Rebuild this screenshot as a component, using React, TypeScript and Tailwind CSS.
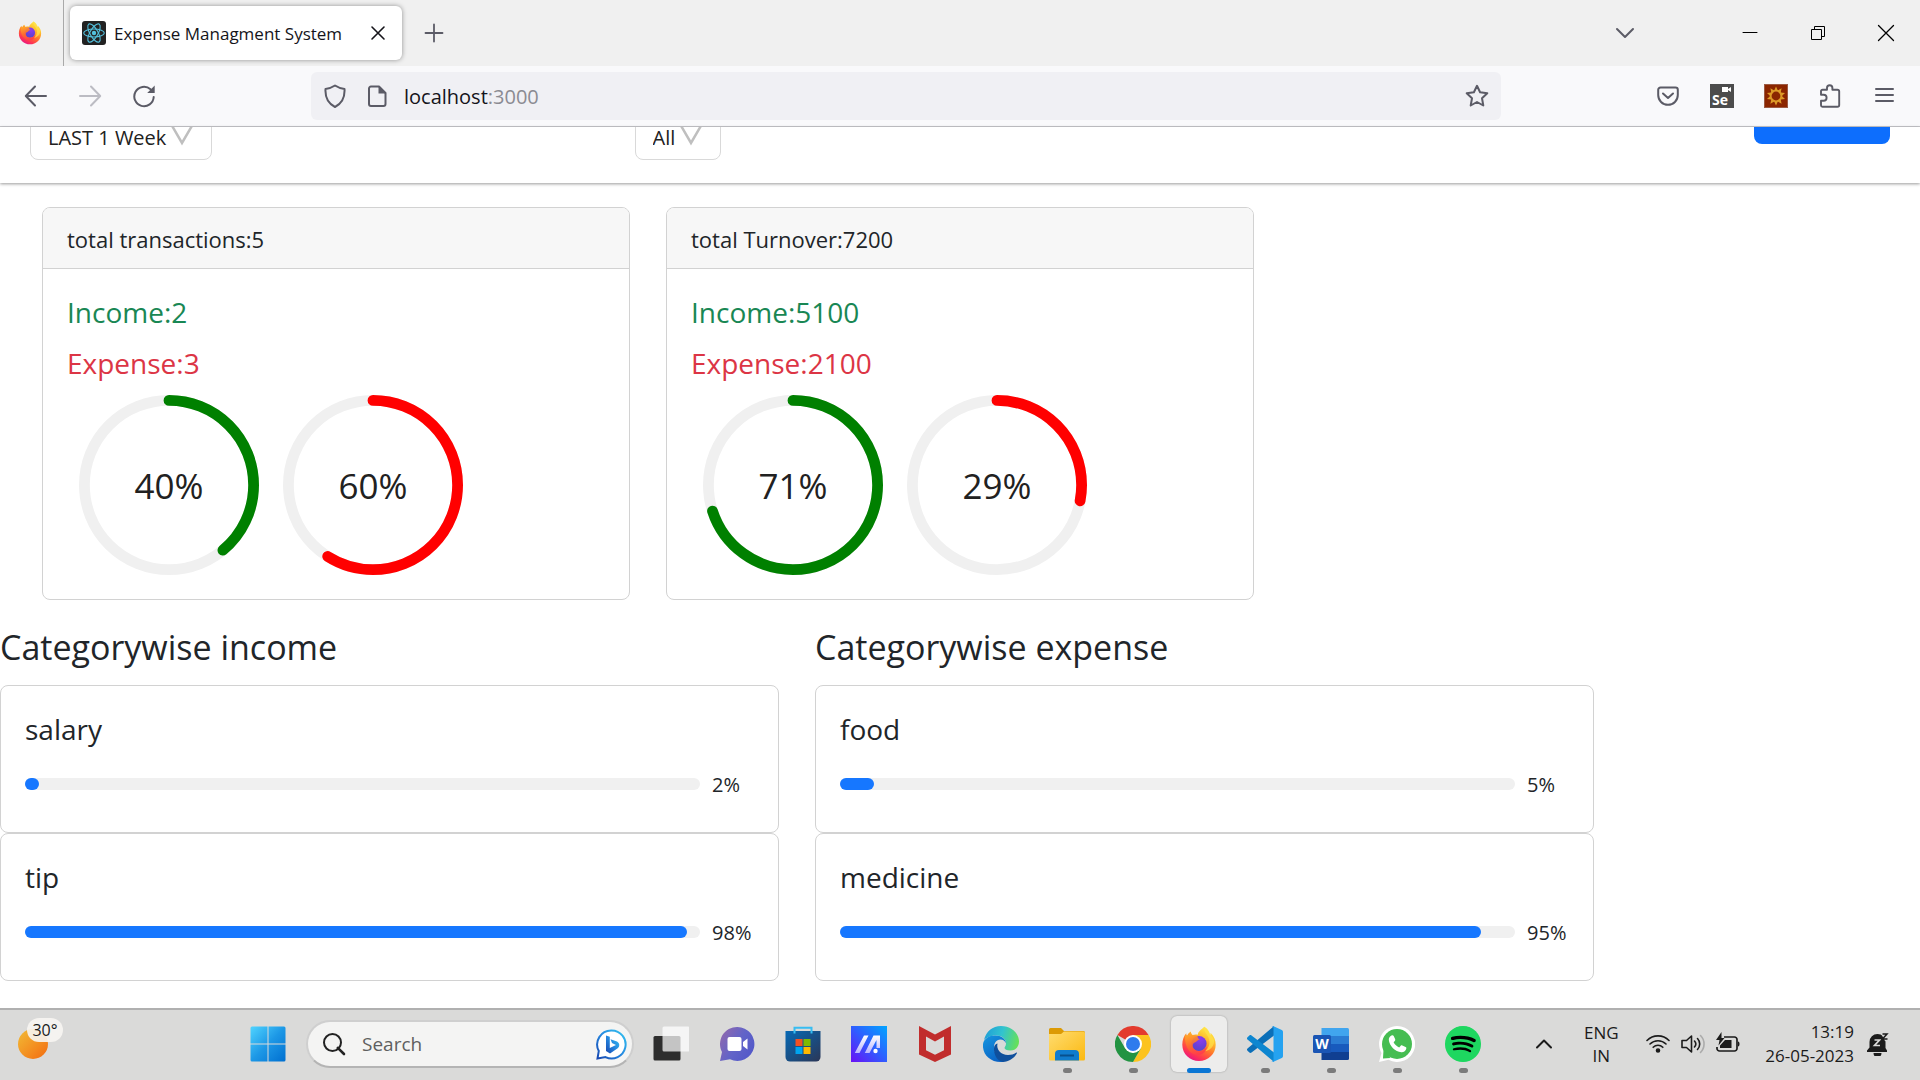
import React from "react";
import { FaSpotify } from "react-icons/fa";

type IconProps = { className?: string };

const FirefoxIcon = ({ className = "", id }: IconProps & { id: string }) => (
  <svg className={className} viewBox="0 0 36 36" aria-hidden="true">
    <defs>
      <linearGradient id={`${id}a`} x1="0.8" y1="0" x2="0.25" y2="1">
        <stop offset="0" stopColor="#fff44f" />
        <stop offset="0.3" stopColor="#ffc02e" />
        <stop offset="0.55" stopColor="#ff7a2a" />
        <stop offset="0.8" stopColor="#ff3750" />
        <stop offset="1" stopColor="#e5108c" />
      </linearGradient>
      <radialGradient id={`${id}b`} cx="0.6" cy="0.2" r="0.9">
        <stop offset="0" stopColor="#8d3cf0" />
        <stop offset="0.6" stopColor="#6a3fd8" />
        <stop offset="1" stopColor="#4f4bc4" />
      </radialGradient>
      <linearGradient id={`${id}c`} x1="0.2" y1="0" x2="0.6" y2="1">
        <stop offset="0" stopColor="#ffa52a" />
        <stop offset="0.5" stopColor="#ff6a2f" />
        <stop offset="1" stopColor="#ff3a4c" />
      </linearGradient>
    </defs>
    <path
      d="M23.2 0.8c4.6 3 5 6.400 6 8.700 0.300-1 0.400-2 0.300-2.800 3.800 3.700 5.200 7.800 5.200 12 0 9.200-7.500 16.300-16.700 16.300S1.300 27.800 1.300 18.700c0-5 1.500-8.500 3.900-11.400 0.100 1.300 0.400 2.100 0.900 2.900 0.500-1.900 1.800-3.500 3.700-4.600 0 1.300 0.700 2.500 1.800 3.300 1.500-0.500 3.500-0.700 5.200-0.200C17.200 5.200 20.500 3.700 23.200 0.800Z"
      fill={`url(#${id}a)`}
    />
    <circle cx="18" cy="17.500" r="7.600" fill={`url(#${id}b)`} />
    <path
      d="M4 9.500c2-0.500 5.200-0.900 8 0.300 1.500-0.600 3-0.400 4.500 0.400 0.200 1.800 0.800 2.600 2.500 3.300-1.700 0.300-3.300 1.300-4 2.500-1.400 0.400-2.600 1.200-3.200 2.400-0.500 3.800 2.200 6.700 6.200 6.700 3.500 0 6-2 7.700-4.500 0 5-3.700 8.400-8.500 8.400C9.500 29 3.600 22 4 9.500Z"
      fill={`url(#${id}c)`}
      opacity="0.9"
    />
    <path d="M23.200 0.800c-1 5.600 4 7.600 5 13 1 5-1 8.500-4 11.500 6-1.500 9-6 9-10.800-1-3-2.500-4.500-4-6-0.800-3-2.500-5.700-6-7.700Z" fill="#ffe14a" opacity="0.75" />
  </svg>
);

const ReactLogo = () => (
  <svg className="size-6 shrink-0" viewBox="0 0 24 24" aria-hidden="true">
    <rect width="24" height="24" rx="3" fill="#222" />
    <g fill="none" stroke="#53c1de" strokeWidth="1.1">
      <ellipse cx="12" cy="12" rx="10.300" ry="4" />
      <ellipse cx="12" cy="12" rx="10.300" ry="4" transform="rotate(60 12 12)" />
      <ellipse cx="12" cy="12" rx="10.300" ry="4" transform="rotate(120 12 12)" />
    </g>
    <circle cx="12" cy="12" r="2.200" fill="#53c1de" />
  </svg>
);

type LineProps = {
  d: string;
  size?: string;
  color?: string;
  width?: number;
  box?: number;
  children?: React.ReactNode;
};
const Line = ({ d, size = "size-6", color = "#5b5b66", width = 2, box = 24, children }: LineProps) => (
  <svg
    className={`${size} shrink-0`}
    viewBox={`0 0 ${box} ${box}`}
    fill="none"
    stroke={color}
    strokeWidth={width}
    strokeLinecap="round"
    strokeLinejoin="round"
    aria-hidden="true"
  >
    <path d={d} />
    {children}
  </svg>
);

const iconButton = "flex shrink-0 items-center justify-center";

function TabStrip() {
  return (
    <header className="flex h-[66px] items-center bg-[#f0f0f0]">
      <div className="flex h-full w-16 items-center border-r border-[#a9a9a9] pl-[18px]">
        <FirefoxIcon id="ffs" className="size-6" />
      </div>
      <div className="ml-[6px] flex h-[54px] w-[332px] items-center rounded-md bg-white pr-3 pl-3 shadow-[0_0_5px_rgba(0,0,0,0.4)]">
        <ReactLogo />
        <span className="ml-2 flex-1 pt-px text-[17px] leading-6 whitespace-nowrap text-[#15141a]">Expense Managment System</span>
        <button type="button" aria-label="Close tab" className={`${iconButton} size-6`}>
          <Line d="M6 6l12 12M18 6L6 18" color="#15141a" width={1.6} />
        </button>
      </div>
      <button type="button" aria-label="New tab" className={`${iconButton} ml-5 size-6`}>
        <Line d="M12 3.500v17M3.500 12h17" width={1.8} />
      </button>
      <div className="ml-auto flex items-center pr-[14px]">
        <button type="button" aria-label="List all tabs" className={`${iconButton} size-10`}>
          <Line d="M4 8l8 8 8-8" />
        </button>
        <button type="button" aria-label="Minimize" className={`${iconButton} ml-[85px] size-10`}>
          <Line d="M5 11.500h14" color="#000" width={1} />
        </button>
        <button type="button" aria-label="Restore" className={`${iconButton} ml-7 size-10`}>
          <svg className="size-6" viewBox="0 0 24 24" fill="none" stroke="#000" aria-hidden="true">
            <path d="M5.500 8.500h10v10h-10zM8.500 8.500v-3h10v10h-3" />
          </svg>
        </button>
        <button type="button" aria-label="Close window" className={`${iconButton} ml-7 size-10`}>
          <Line d="M4.500 4.500l15 15M19.500 4.500l-15 15" color="#000" width={1.3} />
        </button>
      </div>
    </header>
  );
}

function Toolbar() {
  return (
    <nav className="flex h-[61px] items-center border-b border-[#c8c8cc] bg-[#f9f9fb] pr-6 pl-6">
      <button type="button" aria-label="Back" className={`${iconButton} size-6`}>
        <Line d="M22 12H2M11 2.500L1.800 12 11 21.500" />
      </button>
      <button type="button" aria-label="Forward" disabled className={`${iconButton} ml-[30px] size-6`}>
        <Line d="M2 12h20M13 2.500l9.200 9.500L13 21.500" color="#bcbcc3" />
      </button>
      <button type="button" aria-label="Reload" className={`${iconButton} ml-[30px] size-6`}>
        <svg className="size-6" viewBox="0 0 24 24" fill="none" stroke="#5b5b66" strokeWidth="2" strokeLinecap="round" aria-hidden="true">
          <path d="M18.500 5.300A9.700 9.700 0 1 0 21.700 13" />
          <path d="M22.700 1.500v7.500h-7.500z" fill="#5b5b66" stroke="none" />
        </svg>
      </button>
      <div className="ml-[155px] flex h-12 min-w-0 flex-1 items-center rounded-md bg-[#f0f0f4] px-3 xl:mr-[155px]">
        <Line d="M12 1.500c3 2 6 3 9.500 3.500.5 8-2.500 14.500-9.500 18-7-3.500-10-10-9.500-18C6 4.500 9 3.500 12 1.500z" />
        <svg className="ml-[18px] size-6 shrink-0" viewBox="0 0 24 24" fill="none" stroke="#5b5b66" strokeWidth="2" strokeLinejoin="round" aria-hidden="true">
          <path d="M6 2.500h8l6.500 6.500v11a2 2 0 0 1-2 2H6a2 2 0 0 1-2-2V4.500a2 2 0 0 1 2-2z" />
          <path d="M13.500 2v7.500H21z" fill="#5b5b66" stroke="none" />
        </svg>
        <a href="#" className="ml-[15px] flex-1 pt-[2px] text-xl leading-7 text-[#15141a]">
          localhost<span className="text-[#8b8b92]">:3000</span>
        </a>
        <button type="button" aria-label="Bookmark this page" className={`${iconButton} size-6`}>
          <Line d="M12 1.800l3.100 6.500 7.200 1-5.300 5 1.300 7.200-6.300-3.500-6.300 3.500 1.300-7.200-5.300-5 7.200-1z" />
        </button>
      </div>
      <div className="flex items-center gap-[30px]">
        <button type="button" aria-label="Save to Pocket" className={iconButton}>
          <Line d="M4.500 3.500h15a2.300 2.300 0 0 1 2.300 2.300V11a9.800 9.800 0 0 1-19.600 0V5.800a2.300 2.300 0 0 1 2.300-2.300zM7 9.500l5 4.500 5-4.500" />
        </button>
        <button type="button" aria-label="Selenium IDE" className="relative flex size-6 items-end bg-[#4c4c4c] pl-[2px] text-sm leading-4 font-bold text-white">
          Se
          <svg className="absolute top-[3px] right-[3px] h-[5px] w-[9px]" viewBox="0 0 9 5" fill="#fff" aria-hidden="true">
            <path d="M0 0h6v5H0zM6 2l3-2v5L6 3z" />
          </svg>
        </button>
        <button type="button" aria-label="Sun extension" className={iconButton}>
          <svg className="size-6" viewBox="0 0 24 24" aria-hidden="true">
            <rect x="0.500" y="0.500" width="23" height="23" fill="#8b2500" stroke="#9c5a43" />
            <circle cx="12" cy="12" r="5.300" fill="none" stroke="#dd9a28" strokeWidth="1.800" />
            {[0, 36, 72, 108, 144, 180, 216, 252, 288, 324].map((a) => (
              <path key={a} d="M10.200 6.500L12 2.500l1.800 4z" fill="#dd9a28" transform={`rotate(${a} 12 12)`} />
            ))}
          </svg>
        </button>
        <button type="button" aria-label="Extensions" className={iconButton}>
          <Line d="M3 10.800V7.200a1.500 1.500 0 0 1 1.500-1.500H9V4a2.700 2.700 0 0 1 5.400 0v1.700h5a1.800 1.800 0 0 1 1.800 1.800V21a1.800 1.800 0 0 1-1.800 1.800H4.500A1.500 1.500 0 0 1 3 21.300v-4.500h2.600a3 3 0 0 0 0-6z" width={1.9} />
        </button>
        <button type="button" aria-label="Open application menu" className={iconButton}>
          <Line d="M4 5h17M4 11h17M4 17h17" />
        </button>
      </div>
    </nav>
  );
}

function FilterSelect({ label, value, width }: { label: string; value: string; width: string }) {
  return (
    <div className={`relative -mt-[14px] h-[47px] rounded-lg border border-[#d9d9d9] ${width}`}>
      <select aria-label={label} className="size-full appearance-none bg-transparent pt-[2px] pl-[17px] text-xl leading-7 text-[#212121]">
        <option>{value}</option>
      </select>
      <svg className="pointer-events-none absolute top-2 right-[17px] h-6 w-6" viewBox="0 0 24 24" fill="none" stroke="#bfbfbf" strokeWidth="2.500" aria-hidden="true">
        <path d="M1 2l11 19L23 2" />
      </svg>
    </div>
  );
}

function FilterBar() {
  return (
    <section className="flex items-start overflow-hidden px-[30px] pb-[23px] shadow-[0_1px_3px_rgba(0,0,0,0.4)]">
      <div className="w-[32.500%]">
        <FilterSelect label="Period" value="LAST 1 Week" width="w-[182px]" />
      </div>
      <FilterSelect label="Type" value="All" width="w-[86px]" />
      <button type="button" aria-label="Add" className="-mt-10 ml-auto h-[57px] w-[136px] rounded-lg bg-[#0d6efd]" />
    </section>
  );
}

function Ring({ percent, stroke }: { percent: number; stroke: string }) {
  return (
    <div className="relative flex size-[180px] items-center justify-center" role="img" aria-label={`${percent} percent`}>
      <svg className="absolute inset-0 -rotate-90" viewBox="0 0 100 100" fill="none" strokeWidth="6" strokeLinecap="round" aria-hidden="true">
        <circle cx="50" cy="50" r="47" stroke="#f0f0f0" />
        <circle cx="50" cy="50" r="47" stroke={stroke} pathLength={100} strokeDasharray={`${percent - 1} 200`} />
      </svg>
      <span className="relative pt-[2px] text-[35px] leading-9 text-[#212121]">{percent}%</span>
    </div>
  );
}

type Summary = { title: string; income: number; expense: number; incomePct: number; expensePct: number };
const summaries: Summary[] = [
  { title: "total transactions:5", income: 2, expense: 3, incomePct: 40, expensePct: 60 },
  { title: "total Turnover:7200", income: 5100, expense: 2100, incomePct: 71, expensePct: 29 },
];

function SummaryCard({ title, income, expense, incomePct, expensePct }: Summary) {
  return (
    <article className="overflow-hidden rounded-lg border border-[#d2d2d2]">
      <header className="border-b border-[#d2d2d2] bg-[#f7f7f7] px-6 pt-[13px] pb-[11px] text-[22px] leading-9">{title}</header>
      <div className="px-6 pt-[25px] pb-6">
        <h5 className="mb-[15px] text-[28px] leading-9 text-[#198754]">Income:{income}</h5>
        <h5 className="mb-[14px] text-[28px] leading-9 text-[#dc3545]">Expense:{expense}</h5>
        <div className="flex flex-wrap gap-6 pl-3">
          <Ring percent={incomePct} stroke="#008000" />
          <Ring percent={expensePct} stroke="#ff0000" />
        </div>
      </div>
    </article>
  );
}

const categories = [
  { heading: "Categorywise income", rows: [{ name: "salary", pct: 2 }, { name: "tip", pct: 98 }] },
  { heading: "Categorywise expense", rows: [{ name: "food", pct: 5 }, { name: "medicine", pct: 95 }] },
];

function CategoryCard({ name, pct }: { name: string; pct: number }) {
  return (
    <article className="rounded-lg border border-[#d2d2d2] px-6 pt-[25px] pb-8">
      <h5 className="text-[28px] leading-9">{name}</h5>
      <div className="mt-5 flex h-[33px] items-center gap-3">
        <div className="h-3 flex-1 rounded-full bg-[#f0f0f0]" role="progressbar" aria-label={name} aria-valuenow={pct}>
          <div className="h-3 rounded-full bg-[#1677ff]" style={{ width: `${pct}%` }} />
        </div>
        <span className="w-[42px] pt-[2px] text-xl leading-8">{pct}%</span>
      </div>
    </article>
  );
}

function CategorySection() {
  return (
    <section className="mt-[25px] grid grid-cols-12 gap-9">
      {categories.map((c) => (
        <div key={c.heading} className="col-span-5">
          <h4 className="mb-4 text-[34px] leading-[44px]">{c.heading}</h4>
          {c.rows.map((r) => (
            <CategoryCard key={r.name} {...r} />
          ))}
        </div>
      ))}
    </section>
  );
}

const StartIcon = () => (
  <svg className="size-9" viewBox="0 0 36 36" aria-hidden="true">
    <defs>
      <linearGradient id="win" x1="0" y1="0" x2="1" y2="1">
        <stop offset="0" stopColor="#50d4ff" />
        <stop offset="0.5" stopColor="#1d98e6" />
        <stop offset="1" stopColor="#006fd0" />
      </linearGradient>
    </defs>
    <path d="M2 .5h15.500v17H.5V2A1.500 1.500 0 0 1 2 .5zM18.500.5H34A1.500 1.500 0 0 1 35.500 2v15.500h-17zM.5 18.500h17v17H2A1.500 1.500 0 0 1 .5 34zM18.500 18.500h17V34a1.500 1.500 0 0 1-1.500 1.500H18.500z" fill="url(#win)" />
  </svg>
);

const BingIcon = () => (
  <svg className="size-[31px] shrink-0" viewBox="0 0 31 31" aria-hidden="true">
    <defs>
      <linearGradient id="bing" x1="1" y1="0" x2="0" y2="1">
        <stop offset="0" stopColor="#35c5f0" />
        <stop offset="0.500" stopColor="#2588e0" />
        <stop offset="1" stopColor="#1747b0" />
      </linearGradient>
    </defs>
    <path d="M15.500 1.500a14 14 0 1 1-6 26.600L1.500 29.500 2.800 22A14 14 0 0 1 15.500 1.500z" fill="#fff" stroke="url(#bing)" strokeWidth="2" />
    <path d="M10 6.500l3.800 1.300V19L20 16l-4-2-1.500-3.800 6.500 2.300c2.800 1.500 3 5 .7 6.800L14 24.500l-4-2.500z" fill="url(#bing)" />
  </svg>
);

const TaskViewIcon = () => (
  <svg className="size-9" viewBox="0 0 36 36" aria-hidden="true">
    <rect x="0.500" y="10" width="27" height="24.500" rx="1.500" fill="#2d2d2d" />
    <rect x="9.500" y="0.500" width="27" height="25" rx="1.500" fill="#fff" opacity="0.72" />
  </svg>
);

const ChatIcon = () => (
  <svg className="size-9" viewBox="0 0 36 36" aria-hidden="true">
    <defs>
      <linearGradient id="chat" x1="0" y1="0.200" x2="1" y2="0.800">
        <stop offset="0" stopColor="#8f68ae" />
        <stop offset="0.500" stopColor="#6264c8" />
        <stop offset="1" stopColor="#5157c9" />
      </linearGradient>
    </defs>
    <path d="M18.300 1A17 17 0 1 1 11 33.300L1 35l2-9A17 17 0 0 1 18.300 1z" fill="url(#chat)" />
    <rect x="8.500" y="11" width="14" height="14" rx="2" fill="#fff" />
    <path d="M24 16l4.500-3.500v11L24 20z" fill="#fff" />
  </svg>
);

const StoreIcon = () => (
  <svg className="size-9" viewBox="0 0 36 36" aria-hidden="true">
    <defs>
      <linearGradient id="store" x1="0" y1="0" x2="1" y2="1">
        <stop offset="0" stopColor="#0669b5" />
        <stop offset="1" stopColor="#2b3656" />
      </linearGradient>
    </defs>
    <path d="M.5 5h35v26a4.500 4.500 0 0 1-4.500 4.500H5A4.500 4.500 0 0 1 .5 31z" fill="url(#store)" />
    <path d="M9.500 7.500V1.800h17v5.700" fill="none" stroke="#37bdf2" strokeWidth="2" />
    <path d="M10.500 13h7v7h-7z" fill="#f25022" />
    <path d="M18.500 13h7v7h-7z" fill="#7fba00" />
    <path d="M10.500 21h7v7h-7z" fill="#00a4ef" />
    <path d="M18.500 21h7v7h-7z" fill="#ffb900" />
  </svg>
);

const AsusIcon = () => (
  <svg className="size-9" viewBox="0 0 36 36" aria-hidden="true">
    <defs>
      <linearGradient id="asus" x1="1" y1="0" x2="0" y2="1">
        <stop offset="0" stopColor="#00a5ff" />
        <stop offset="0.500" stopColor="#2f5dff" />
        <stop offset="1" stopColor="#6a10f5" />
      </linearGradient>
      <linearGradient id="asusMark" x1="0" y1="0" x2="0" y2="1">
        <stop offset="0" stopColor="#ffffff" />
        <stop offset="1" stopColor="#b9b4ff" />
      </linearGradient>
    </defs>
    <path d="M0 0h36v36H0z" fill="url(#asus)" />
    <path d="M13 9.500h4.500L8.500 27H3.800zM22.500 9.500H29V22h-3.500v-8L18.500 27h-4.700z" fill="url(#asusMark)" />
    <circle cx="24.500" cy="25" r="2.200" fill="#fff" />
  </svg>
);

const McAfeeIcon = () => (
  <svg className="size-9" viewBox="0 0 36 36" aria-hidden="true">
    <path fillRule="evenodd" d="M2 0l16 8.500L34 0v28.500L18 36 2 28.500zM9 10.500v13.700l9 4.600 9-4.600V10.500l-9 5z" fill="#c12d2d" />
  </svg>
);

const EdgeIcon = () => (
  <svg className="size-9" viewBox="0 0 36 36" aria-hidden="true">
    <defs>
      <linearGradient id="edgeA" x1="0" y1="0.300" x2="1" y2="0.500">
        <stop offset="0" stopColor="#1f9fd8" />
        <stop offset="0.500" stopColor="#32c3cf" />
        <stop offset="1" stopColor="#66e05a" />
      </linearGradient>
      <linearGradient id="edgeB" x1="0" y1="0" x2="0.600" y2="1">
        <stop offset="0" stopColor="#1596e0" />
        <stop offset="1" stopColor="#0b62c4" />
      </linearGradient>
    </defs>
    <path d="M1 14C3 5.500 9.500 0 18 0c10.500 0 18 7.500 18 15.500 0 5.500-4 9-8.500 9-4 0-6-1.500-6-2.600 0-1 1.500-1.700 1.500-4.400C23 13 19 9.500 13 9.500 7 9.500 3 12 1 14z" fill="url(#edgeA)" />
    <path d="M0 18c1-5.500 6-8.500 12-8.500 6.500 0 10.800 3.500 11 7.800-1-2.300-3-3.700-5.500-3.700-4.500 0-6.500 4-6.500 8C11 28 16 33 21 35.700 8.500 37.500-1 29 0 18z" fill="url(#edgeB)" />
    <path d="M14.500 17.500c-1.500 6 3.500 11.500 10.500 11.500 3.300 0 5.800-1 8-2.300.7-.3 1.200.2.800.9C31 32.500 25.500 36 20 36 14 35 10.500 28 11 22c.2-2.500 1.500-4 3.500-4.500z" fill="#0f4f9c" />
  </svg>
);

const FolderIcon = () => (
  <svg className="size-9" viewBox="0 0 36 36" aria-hidden="true">
    <defs>
      <linearGradient id="fold" x1="0" y1="0" x2="1" y2="1">
        <stop offset="0" stopColor="#ffdc70" />
        <stop offset="1" stopColor="#fbb911" />
      </linearGradient>
    </defs>
    <path d="M0 3.500A1.500 1.500 0 0 1 1.500 2H12l3 3h19.500A1.500 1.500 0 0 1 36 6.500V20H0z" fill="#dc9a05" />
    <path d="M0 8h12l3-2.500h19.500A1.500 1.500 0 0 1 36 7v26a1.500 1.500 0 0 1-1.500 1.500h-33A1.500 1.500 0 0 1 0 33z" fill="url(#fold)" />
    <path d="M6 34.500V28a4 4 0 0 1 4-4h16a4 4 0 0 1 4 4v6.500z" fill="#107cce" />
    <path d="M11 29.500h14" stroke="#08508e" strokeWidth="2" />
  </svg>
);

const ChromeIcon = () => (
  <svg className="size-9" viewBox="0 0 36 36" aria-hidden="true">
    <path d="M18 18L2.400 9A18 18 0 0 1 33.600 9z" fill="#e33b2e" />
    <path d="M18 9h15.600A18 18 0 0 1 18 36l7.800-13.500z" fill="#fcc31e" />
    <path d="M2.400 9l7.800 13.500L18 27l7.800-4.500L18 36A18 18 0 0 1 2.400 9z" fill="#229342" />
    <circle cx="18" cy="18" r="9" fill="#fff" />
    <circle cx="18" cy="18" r="7" fill="#2f7bed" />
  </svg>
);

const CodeIcon = () => (
  <svg className="size-9" viewBox="0 0 36 36" aria-hidden="true">
    <path d="M27 0v9.500L4.500 26.600c-.6.500-1.500.5-2.100-.1L.5 24.700c-.7-.6-.7-1.700 0-2.300z" fill="#0b6fb8" />
    <path d="M27 36v-9.500L4.500 9.400c-.6-.5-1.500-.5-2.100.1L.5 11.300c-.7.600-.7 1.700 0 2.300z" fill="#0d86d0" />
    <path d="M26.500.2L34.800 4A2 2 0 0 1 36 5.900v24.200a2 2 0 0 1-1.200 1.900l-8.300 3.800c-.8.300-1.500.1-2-.4 1 .5 2-.2 2-1.400V2c0-1.200-1-1.900-2-1.400.5-.5 1.200-.7 2-.4z" fill="#25a2f0" />
  </svg>
);

const WordIcon = () => (
  <span className="relative block size-9">
    <svg className="size-9" viewBox="0 0 36 36" aria-hidden="true">
      <path d="M8.500 2h26A1.500 1.500 0 0 1 36 3.500V10H8.500z" fill="#41a5ee" />
      <path d="M8.500 10H36v8H8.500z" fill="#2b7cd3" />
      <path d="M8.500 18H36v8H8.500z" fill="#185abd" />
      <path d="M8.500 26H36v6.500a1.500 1.500 0 0 1-1.500 1.500h-26z" fill="#103f91" />
      <rect y="9" width="18" height="18" rx="1.500" fill="#1a55b4" />
    </svg>
    <span className="absolute top-[9px] left-0 w-[18px] text-center text-sm leading-[18px] font-bold text-white">W</span>
  </span>
);

const WhatsAppIcon = () => (
  <svg className="size-9" viewBox="0 0 36 36" aria-hidden="true">
    <path d="M18 0a18 18 0 1 1-8.500 33.800L0 36l2.500-9A18 18 0 0 1 18 0z" fill="#fff" />
    <circle cx="18" cy="18" r="15" fill="#46bd52" />
    <path d="M4.500 24l7 8L4 32.500z" fill="#46bd52" />
    <path d="M12.500 9.500c.8-.5 1.800-.3 2.200.5l1.500 3.300c.2.600 0 1.200-.4 1.600l-1.200 1.300c1.200 2.300 3.200 4.200 5.600 5.300l1.500-1.700c.4-.5 1-.6 1.600-.4l3.300 1.600c.6.300.9.800.7 1.500-.4 2.400-2.600 3.900-5 3.700-6-.5-12-6.300-12.500-12.500-.1-1.700 1-3.300 2.700-4.200z" fill="#fff" />
  </svg>
);

const SpotifyIcon = () => (
  <span className="flex size-9 items-center justify-center rounded-full bg-[radial-gradient(circle,#000_60%,#1ed760_62%)]">
    <FaSpotify className="size-9 text-[#1ed760]" aria-hidden="true" />
  </span>
);

const apps: { name: string; icon: React.ReactNode; state?: "open" | "active" }[] = [
  { name: "Task View", icon: <TaskViewIcon /> },
  { name: "Chat", icon: <ChatIcon /> },
  { name: "Microsoft Store", icon: <StoreIcon /> },
  { name: "MyASUS", icon: <AsusIcon /> },
  { name: "McAfee", icon: <McAfeeIcon /> },
  { name: "Edge", icon: <EdgeIcon /> },
  { name: "File Explorer", icon: <FolderIcon />, state: "open" },
  { name: "Chrome", icon: <ChromeIcon />, state: "open" },
  { name: "Firefox", icon: <FirefoxIcon id="ffl" className="size-9" />, state: "active" },
  { name: "Visual Studio Code", icon: <CodeIcon />, state: "open" },
  { name: "Word", icon: <WordIcon />, state: "open" },
  { name: "WhatsApp", icon: <WhatsAppIcon />, state: "open" },
  { name: "Spotify", icon: <SpotifyIcon />, state: "open" },
];

function Taskbar() {
  return (
    <footer className="flex h-[72px] items-center border-t-2 border-[#b0b0b0] bg-[#dadad9] pb-[2px] text-[#1b1b1b]">
      <button type="button" aria-label="Weather" className="relative mt-2 ml-[18px] h-[41px] w-[45px] shrink-0 self-start">
        <span className="absolute bottom-0 left-0 size-[30px] rounded-full bg-linear-to-br from-[#f0bb35] to-[#f2690d]" />
        <span className="absolute top-0 right-0 w-9 rounded-full bg-[#f7f5f2]/90 text-center text-base leading-6">30°</span>
      </button>
      <div className="ml-auto flex items-center xl:ml-[187px]">
        <button type="button" aria-label="Start" className={`${iconButton} size-9`}>
          <StartIcon />
        </button>
        <label className="ml-5 flex h-12 w-[328px] items-center rounded-full border-2 border-t-[#cfcfcf] border-r-[#cfcfcf] border-b-[#b4b4b4] border-l-[#cfcfcf] bg-[#f4f4f3] pr-[5px] pl-[14px]">
          <Line d="M15.800 15.800L22 22" color="#222" width={2.6}>
            <circle cx="10.500" cy="10.500" r="8.500" strokeWidth="2" />
          </Line>
          <input type="text" aria-label="Search" placeholder="Search" className="ml-4 min-w-0 flex-1 bg-transparent text-[19px] leading-7 outline-none placeholder:text-[#5f5f5f]" />
          <BingIcon />
        </label>
        <div className="ml-1 flex">
          {apps.map((app) => (
            <div key={app.name} className="flex w-[66px] justify-center">
              <button
                type="button"
                aria-label={app.name}
                className={`relative ${iconButton} size-14 rounded-md ${app.state === "active" ? "bg-[#ededec] shadow-[0_0_2px_rgba(0,0,0,0.3)]" : ""}`}
              >
                {app.icon}
                {app.state === "open" && <span className="absolute -bottom-px left-6 h-[5px] w-[9px] rounded-full bg-[#7b7b7b]" />}
                {app.state === "active" && <span className="absolute -bottom-px left-4 h-[5px] w-6 rounded-full bg-[#0a76d4]" />}
              </button>
            </div>
          ))}
        </div>
      </div>
      <div className="ml-auto flex items-center pr-[30px]">
        <button type="button" aria-label="Show hidden icons" className={`${iconButton} size-6`}>
          <Line d="M5 15.500l7-7 7 7" color="#1b1b1b" />
        </button>
        <button type="button" className="ml-6 w-[42px] text-center text-[17px] leading-[23px]">
          ENG
          <br />
          IN
        </button>
        <div className="ml-6 flex items-center gap-[11px]">
          <svg className="size-6" viewBox="0 0 24 24" fill="none" stroke="#1b1b1b" strokeWidth="1.600" strokeLinecap="round" aria-label="Wi-Fi">
            <path d="M1 8.500a15.500 15.500 0 0 1 22 0M4 12a11.300 11.300 0 0 1 16 0M7.200 15.300a6.800 6.800 0 0 1 9.600 0" />
            <circle cx="12" cy="18.500" r="1.500" fill="#1b1b1b" />
          </svg>
          <svg className="size-6" viewBox="0 0 24 24" fill="none" stroke="#1b1b1b" strokeWidth="1.600" strokeLinejoin="round" strokeLinecap="round" aria-label="Volume">
            <path d="M1 8.500h4.500L10.500 4v16l-5-4.500H1zM13.500 9a4.500 4.500 0 0 1 0 6M16.500 6.500a8 8 0 0 1 0 11" />
            <path d="M19.500 3.500a12 12 0 0 1 0 17" stroke="#ababab" />
          </svg>
          <svg className="size-6" viewBox="0 0 24 24" aria-label="Battery charging">
            <path d="M8 5h10.500A2.500 2.500 0 0 1 21 7.500v9a2.500 2.500 0 0 1-2.500 2.500h-15A2.500 2.500 0 0 1 1 16.500V15" fill="none" stroke="#1b1b1b" strokeWidth="1.700" />
            <path d="M9 8h6.500v8H4v-2.500zM22 9.500c2 0 2 5 0 5zM5.500 0L0 8h3.500L2.500 13.500 8.500 6H5.500z" fill="#1b1b1b" />
          </svg>
        </div>
        <time className="ml-[25px] text-right text-[17px] leading-6">
          13:19
          <br />
          26-05-2023
        </time>
        <svg className="ml-[13px] h-6 w-[23px]" viewBox="0 0 23 24" aria-label="Notifications silenced">
          <path d="M10.500 2a8 8 0 0 0-8 8v5.500L0 18.500V20h20v-1.500L18.500 16V10a8 8 0 0 0-8-8zM6.500 21h8a4 4 0 0 1-8 0z" fill="#1b1b1b" />
          <path d="M14 1.500h8V9h-4z" fill="#dadad9" />
          <path d="M7.500 8h5l-5 5.500h5.500" fill="none" stroke="#dadad9" strokeWidth="1.700" />
          <path d="M15.500 2h4.500l-4.500 5h5" fill="none" stroke="#1b1b1b" strokeWidth="1.500" />
        </svg>
      </div>
    </footer>
  );
}

export default function App() {
  return (
    <div className="flex min-h-screen flex-col bg-white font-['Open_Sans','Noto_Sans',sans-serif] text-[#212529]">
      <TabStrip />
      <Toolbar />
      <main className="flex-1 pb-6">
        <FilterBar />
        <section className="mt-6 grid grid-cols-3 gap-9 px-[42px]">
          {summaries.map((s) => (
            <SummaryCard key={s.title} {...s} />
          ))}
        </section>
        <CategorySection />
      </main>
      <Taskbar />
    </div>
  );
}
